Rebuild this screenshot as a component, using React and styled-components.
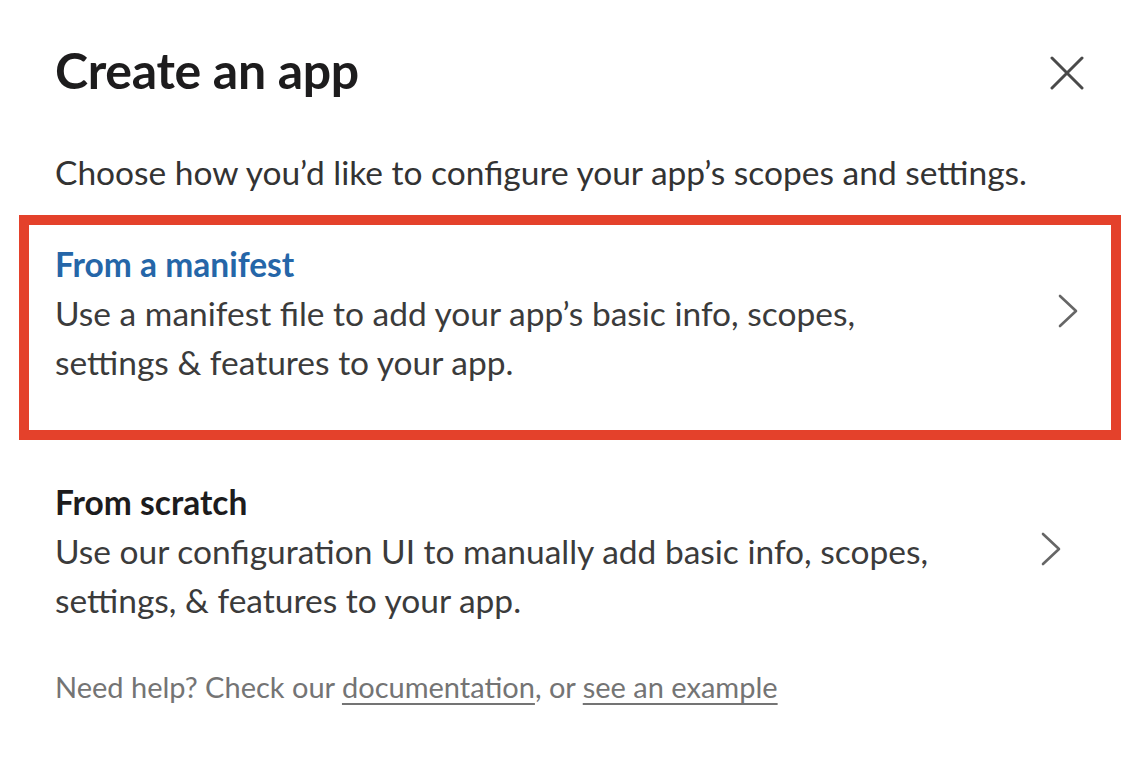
import React from "react";
import styled, { createGlobalStyle } from "styled-components";

const GlobalStyle = createGlobalStyle`
  html, body {
    margin: 0;
    padding: 0;
    background: #fff;
  }
  body {
    font-family: Lato, "Open Sans", "Liberation Sans", sans-serif;
    color: #1d1c1d;
  }
`;

const Dialog = styled.div`
  width: 1144px;
  height: 770px;
  box-sizing: border-box;
  padding: 0 23px 0 19px;
  display: flex;
  flex-direction: column;
`;

const Header = styled.div`
  display: flex;
  align-items: center;
  justify-content: space-between;
  padding: 40px 34px 0 36px;
`;

const Title = styled.h1`
  margin: 0;
  font-size: 50px;
  font-weight: 700;
  line-height: 60px;
  letter-spacing: -0.3px;
`;

const CloseBtn = styled.button`
  width: 40px;
  height: 40px;
  margin-top: 6px;
  padding: 0;
  border: none;
  background: none;
  display: flex;
  align-items: center;
  justify-content: center;
  color: #4a4a4a;
  cursor: pointer;
`;

const Subtitle = styled.p`
  margin: 0;
  padding: 50px 36px 0;
  font-size: 33.5px;
  line-height: 44px;
  color: #333;
`;

const Options = styled.div`
  display: flex;
  flex-direction: column;
  gap: 13px;
  margin-top: 21px;
`;

const Option = styled.div`
  display: flex;
  align-items: flex-start;
  justify-content: space-between;
  border: 10px solid ${(p) => (p.$highlighted ? "#e4412b" : "transparent")};
  padding: ${(p) => (p.$highlighted ? "14px 32px 44px 26px" : "14px 49px 0 26px")};
  cursor: pointer;
`;

const OptionText = styled.div`
  display: flex;
  flex-direction: column;
  max-width: 920px;
`;

const OptionTitle = styled.div`
  font-size: 33.5px;
  font-weight: 700;
  line-height: 50px;
  color: ${(p) => (p.$accent ? "#2566a8" : "#1d1c1d")};
`;

const OptionDesc = styled.div`
  font-size: 33.5px;
  line-height: 48.5px;
  color: #3b3b3b;
`;

const Chevron = styled.svg`
  width: 22px;
  height: 34px;
  flex-shrink: 0;
  color: #666;
  margin-top: 55px;
`;

const Footer = styled.p`
  margin: 0;
  padding: 35px 36px 0;
  font-size: 29px;
  line-height: 36px;
  color: #747474;
`;

const FooterLink = styled.a`
  color: #747474;
  text-decoration: underline;
  text-underline-offset: 5px;
  text-decoration-thickness: 1.5px;
`;

const ChevronIcon = () => (
  <Chevron viewBox="0 0 22 34" fill="none">
    <path d="M3 2 L19 17 L3 32" stroke="currentColor" strokeWidth="2.6" strokeLinecap="round" strokeLinejoin="round" />
  </Chevron>
);

const options = [
  {
    title: "From a manifest",
    desc: "Use a manifest file to add your app’s basic info, scopes, settings & features to your app.",
    highlighted: true,
  },
  {
    title: "From scratch",
    desc: "Use our configuration UI to manually add basic info, scopes, settings, & features to your app.",
    highlighted: false,
  },
];

export default function App() {
  return (
    <>
      <GlobalStyle />
      <Dialog>
        <Header>
          <Title>Create an app</Title>
          <CloseBtn aria-label="Close">
            <svg width="34" height="34" viewBox="0 0 34 34" fill="none">
              <path d="M2 2 L32 32 M32 2 L2 32" stroke="currentColor" strokeWidth="3" strokeLinecap="round" />
            </svg>
          </CloseBtn>
        </Header>
        <Subtitle>Choose how you’d like to configure your app’s scopes and settings.</Subtitle>
        <Options>
          {options.map((o) => (
            <Option key={o.title} $highlighted={o.highlighted}>
              <OptionText>
                <OptionTitle $accent={o.highlighted}>{o.title}</OptionTitle>
                <OptionDesc>{o.desc}</OptionDesc>
              </OptionText>
              <ChevronIcon />
            </Option>
          ))}
        </Options>
        <Footer>
          Need help? Check our <FooterLink href="#">documentation</FooterLink>, or{" "}
          <FooterLink href="#">see an example</FooterLink>
        </Footer>
      </Dialog>
    </>
  );
}
